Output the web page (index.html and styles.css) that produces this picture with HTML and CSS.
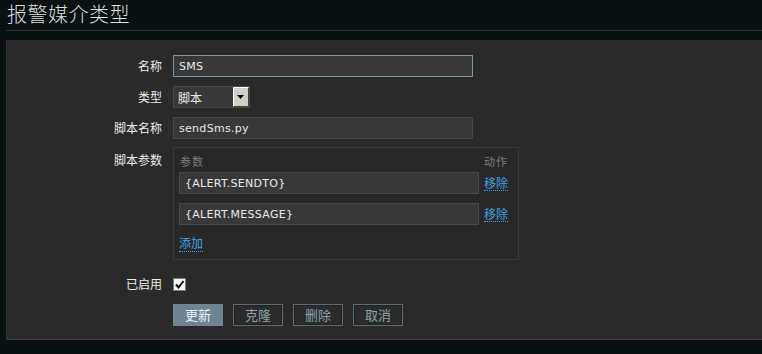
FILE: index.html
```html
<!DOCTYPE html>
<html lang="zh">
<head>
<meta charset="utf-8">
<title>报警媒介类型</title>
<link rel="stylesheet" href="styles.css">
</head>
<body>
<div class="header"><h1 class="title">报警媒介类型</h1></div>
<div class="panel">
  <div class="row">
    <div class="label">名称</div>
    <div class="field"><input class="input focused" type="text" value="SMS"></div>
  </div>
  <div class="row">
    <div class="label">类型</div>
    <div class="field">
      <div class="select"><span class="select-text">脚本</span><span class="select-btn"><svg width="8" height="5" viewBox="0 0 8 5"><path d="M0 0H7L3.5 4Z" fill="#000"/></svg></span></div>
    </div>
  </div>
  <div class="row">
    <div class="label">脚本名称</div>
    <div class="field"><input class="input" type="text" value="sendSms.py"></div>
  </div>
  <div class="row row-params">
    <div class="label label-top">脚本参数</div>
    <div class="field">
      <div class="params">
        <div class="params-head"><span class="ph-param">参数</span><span class="ph-action">动作</span></div>
        <div class="param-row"><input class="input" type="text" value="{ALERT.SENDTO}"><a class="link" href="#">移除</a></div>
        <div class="param-row"><input class="input" type="text" value="{ALERT.MESSAGE}"><a class="link" href="#">移除</a></div>
        <div class="add-row"><a class="link" href="#">添加</a></div>
      </div>
    </div>
  </div>
  <div class="row row-check">
    <div class="label">已启用</div>
    <div class="field"><span class="checkbox"><svg width="11" height="11" viewBox="0 0 11 11"><path d="M2 5.5L4.5 8.5L9.5 2" fill="none" stroke="#000" stroke-width="2"/></svg></span></div>
  </div>
  <div class="row row-buttons">
    <div class="label"></div>
    <div class="field buttons">
      <button class="btn btn-primary">更新</button>
      <button class="btn">克隆</button>
      <button class="btn">删除</button>
      <button class="btn">取消</button>
    </div>
  </div>
</div>
</body>
</html>
```
FILE: styles.css
```css
html, body {
  margin: 0;
  padding: 0;
  background: #0a1112;
  height: 354px;
  overflow: hidden;
  font-family: "Noto Sans CJK SC", "DejaVu Sans", sans-serif;
}
.header {
  margin-left: 6px;
  height: 30px;
  border-bottom: 1px solid #2f3334;
}
.title {
  margin: 0;
  padding: 3px 0 0 1px;
  font-size: 20px;
  line-height: 22px;
  font-weight: 300;
  color: #dedede;
  letter-spacing: 0.5px;
}
.panel {
  margin: 9px 0 0 6px;
  height: 284px;
  padding-top: 15px;
  background: #2a2a2a;
  border-bottom: 1px solid #3d3d3d;
  border-left: 1px solid #2f2f2f;
  box-sizing: content-box;
}
.row {
  display: flex;
  align-items: center;
  margin-bottom: 9px;
}
.label {
  width: 155px;
  flex: none;
  text-align: right;
  color: #ececec;
  font-size: 12px;
  line-height: 14px;
  margin-right: 11px;
}
.label-top {
  align-self: flex-start;
  padding-top: 6px;
}
.field {
  display: flex;
  align-items: center;
}
.input {
  width: 300px;
  height: 22px;
  box-sizing: border-box;
  background: #383838;
  border: 1px solid #484848;
  color: #e8e8e8;
  font-family: "DejaVu Sans", sans-serif;
  font-size: 11px;
  letter-spacing: 0.3px;
  padding: 0 5px;
  margin: 0;
  outline: none;
}
.input.focused {
  border-color: #7a97a6;
}
.select {
  width: 77px;
  height: 22px;
  box-sizing: border-box;
  background: #383838;
  border: 1px solid #484848;
  display: flex;
  align-items: center;
  justify-content: space-between;
}
.select-text {
  color: #ececec;
  font-size: 12px;
  padding-left: 4px;
}
.select-btn {
  width: 16px;
  height: 20px;
  box-sizing: border-box;
  background: #d4d0c8;
  border-top: 1px solid #fff;
  border-left: 1px solid #fff;
  border-right: 1px solid #404040;
  border-bottom: 1px solid #404040;
  display: flex;
  align-items: center;
  justify-content: center;
}
.row-params {
  margin-top: -1px;
  margin-bottom: 17px;
}
.params {
  width: 346px;
  height: 113px;
  box-sizing: border-box;
  border: 1px solid #3b3b3b;
  background: #282828;
  padding: 6px 0 0 5px;
}
.params-head {
  display: flex;
  justify-content: space-between;
  width: 328px;
  color: #7c7c7c;
  font-size: 11px;
  line-height: 14px;
  letter-spacing: 1px;
  padding-left: 1px;
  margin-bottom: 4px;
}
.param-row {
  display: flex;
  align-items: center;
  gap: 5px;
  margin-bottom: 9px;
}
.link {
  color: #3ea2e2;
  font-size: 12px;
  line-height: 14px;
  text-decoration: none;
  border-bottom: 1px dotted #3ea2e2;
}
.add-row {
  margin-top: -5px;
}
.row-check {
  margin-bottom: 13px;
}
.checkbox {
  width: 13px;
  height: 13px;
  box-sizing: border-box;
  background: #f4f4f4;
  border: 1px solid #7a7a7a;
  display: flex;
  align-items: center;
  justify-content: center;
}
.buttons {
  gap: 10px;
}
.btn {
  width: 50px;
  height: 22px;
  box-sizing: border-box;
  background: #2b2b2b;
  border: 1px solid #5a6d77;
  box-shadow: inset 0 0 0 1px #222;
  color: #8ea2ac;
  font-family: "Noto Sans CJK SC", sans-serif;
  font-size: 13px;
  line-height: 18px;
  padding: 0;
  margin: 0;
}
.btn-primary {
  background: #6c8591;
  border-color: #6c8591;
  box-shadow: none;
  color: #f2f6f8;
}
```
